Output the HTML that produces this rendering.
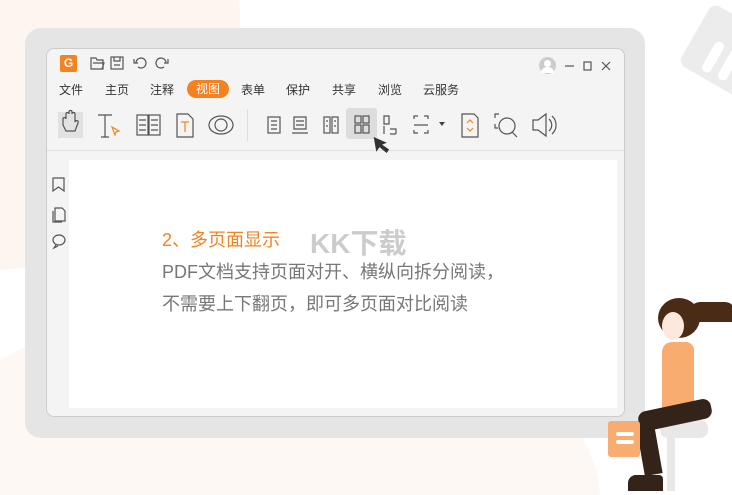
<!DOCTYPE html>
<html><head><meta charset="utf-8"><style>
*{margin:0;padding:0;box-sizing:border-box}
html,body{width:732px;height:495px;overflow:hidden}
body{background:#fff;position:relative;font-family:"Liberation Sans","Noto Sans CJK SC",sans-serif}
#w{position:absolute;left:0;top:0;width:732px;height:495px;overflow:hidden}
.abs{position:absolute}
.menu span{position:absolute;top:0;font-size:12px;color:#333}
svg{position:absolute;overflow:visible}
.ic{fill:none;stroke:#555;stroke-width:1.2}
</style></head><body><div id="w">
<div class="abs" style="left:-260px;top:-230px;width:500px;height:500px;border-radius:50%;background:#fdf5f0"></div>
<div class="abs" style="left:-100px;top:300px;width:700px;height:400px;border-radius:50%;background:#fef8f4"></div>
<div class="abs" style="left:690px;top:18px;width:80px;height:70px;background:#ececec;border-radius:8px;transform:rotate(30deg)"></div>
<div class="abs" style="left:708px;top:40px;width:10px;height:34px;background:#fff;border-radius:5px;transform:rotate(30deg)"></div>
<div class="abs" style="left:724px;top:48px;width:10px;height:34px;background:#fff;border-radius:5px;transform:rotate(30deg)"></div>
<div class="abs" style="left:25px;top:28px;width:620px;height:410px;background:#e5e5e5;border-radius:16px"></div>
<div class="abs" style="left:46px;top:48px;width:579px;height:369px;background:#f4f4f4;border:1px solid #ccc;border-radius:8px"></div>
<div class="abs" style="left:47px;top:150px;width:577px;height:1px;background:#e0e0e0"></div>
<div class="abs" style="left:69px;top:160px;width:548px;height:248px;background:#fff"></div>
<div class="abs" style="left:60px;top:55px;width:17px;height:17px;background:#f58220;border-radius:2px;color:#fff;font-size:12px;font-weight:bold;text-align:center;line-height:16px">G</div>
<svg style="left:90px;top:55px" width="80" height="16" class="ic"><path d="M1 3h5l1 2h6v9H1z M3 8h11l-2 6"/><rect x="21" y="2" width="12" height="12"/><path d="M24 2v4h6V2 M24 10h6"/><path d="M46 8a5 5 0 1 1 2 4 M44 4v4h4"/><path d="M76 8a5 5 0 1 0-2 4 M78 4v4h-4"/></svg>
<div class="abs" style="left:539px;top:57px;width:17px;height:17px;border-radius:50%;background:#ccc"></div>
<div class="abs" style="left:544px;top:60px;width:7px;height:7px;border-radius:50%;background:#fff"></div>
<div class="abs" style="left:541px;top:67px;width:13px;height:6px;border-radius:6px 6px 0 0;background:#fff"></div>
<svg style="left:565px;top:60px" width="50" height="12" class="ic"><path d="M0 6h9"/><rect x="19" y="2" width="7" height="8"/><path d="M37 2l8 8M45 2l-8 8"/></svg>
<div class="menu abs" style="left:0;top:81px;width:732px;height:16px">
<span style="left:59px">文件</span><span style="left:105px">主页</span><span style="left:150px">注释</span>
<span style="left:187px;top:-1px;width:42px;height:18px;background:#f58220;border-radius:9px;color:#fff;text-align:center;line-height:18px">视图</span>
<span style="left:241px">表单</span><span style="left:286px">保护</span><span style="left:332px">共享</span><span style="left:378px">浏览</span><span style="left:423px">云服务</span></div>
<div class="abs" style="left:58px;top:112px;width:25px;height:26px;background:#e2e2e2"></div>
<div class="abs" style="left:346px;top:108px;width:31px;height:31px;background:#ddd;border-radius:3px"></div>
<div class="abs" style="left:247px;top:109px;width:1px;height:32px;background:#ddd"></div>
<svg style="left:0;top:0" width="732" height="160" class="ic">
<path d="M63 125v-6c0-2 3-2 3 0v-5c0-2 3-2 3 0v-2c0-2 3-2 3 0v2c0-2 3-2 3 0v8c1-2 4-2 3 1l-3 8h-9z"/>
<path d="M98 115h14M105 115v22M101 137h8"/><path d="M112 127l7 4-3 1-1 3z" stroke="#f58220"/>
<rect x="137" y="115" width="11" height="20"/><rect x="149" y="115" width="11" height="20"/><path d="M139 120h7M139 125h7M139 130h7M151 120h7M151 125h7M151 130h7"/>
<path d="M177 114h11l5 5v18h-16z"/><path d="M181 122h8M185 122v10" stroke="#f58220"/>
<ellipse cx="221" cy="125" rx="12" ry="9"/><circle cx="221" cy="125" r="6"/>
<rect x="268" y="117" width="12" height="16"/><path d="M271 121h6M271 125h6M271 129h6"/>
<path d="M294 117h12v12h-12zM292 133h16M296 121h8M296 125h8"/>
<rect x="324" y="117" width="6" height="16"/><rect x="332" y="117" width="6" height="16"/><path d="M326 121h2M326 126h2M334 121h2M334 126h2"/>
<rect x="355" y="116" width="6" height="7"/><rect x="363" y="116" width="6" height="7"/><rect x="355" y="125" width="6" height="8"/><rect x="363" y="125" width="6" height="8"/>
<path d="M384 116h5v8h-5zM384 126v8M390 129h6v5M390 134h6"/>
<path d="M414 119v-3h4M414 130v3h4M424 116h4v3M424 133h4v-3M414 125h14"/>
<path d="M462 114h12l4 4v19h-16z"/><path d="M467 123l3-3 3 3M467 128l3 3 3-3" stroke="#f58220"/>
<path d="M495 118v-4h4M495 124v4h3"/><circle cx="507" cy="126" r="8"/><path d="M512 132l5 5"/>
<path d="M533 120h5l8-6v22l-8-6h-5z M549 119a8 8 0 0 1 0 12M552 116a12 12 0 0 1 0 18"/>
</svg>
<svg style="left:439px;top:122px" width="6" height="4"><path d="M0 0h6L3 4z" fill="#444"/></svg>
<svg style="left:372px;top:134px" width="24" height="24"><path d="M3 2l0 15 4-4 6 7 3-3-6-6 5-1z" fill="#333" transform="rotate(-10 8 10)"/></svg>
<svg style="left:50px;top:176px" width="20" height="75" class="ic"><path d="M3 2h11v13l-5.5-4L3 15z"/><path d="M5 32h7l3 3v10H5z M3 35v11h9"/><ellipse cx="9" cy="64" rx="6" ry="5"/><path d="M6 69l-2 3 4-2"/></svg>
<div class="abs" style="left:162px;top:226px;font-size:18px;color:#f58220;white-space:nowrap">2、多页面显示</div>
<div class="abs" style="left:162px;top:258px;font-size:18px;color:#777;white-space:nowrap">PDF文档支持页面对开、横纵向拆分阅读，</div>
<div class="abs" style="left:162px;top:290px;font-size:18px;color:#777;white-space:nowrap">不需要上下翻页，即可多页面对比阅读</div>
<div class="abs" style="left:310px;top:222px;font-size:28px;font-weight:bold;color:#ccc;white-space:nowrap">KK下载</div>
<div class="abs" style="left:660px;top:420px;width:48px;height:18px;background:#e8e8e8;border-radius:8px"></div>
<div class="abs" style="left:667px;top:436px;width:8px;height:55px;background:#e8e8e8"></div>
<div class="abs" style="left:658px;top:298px;width:42px;height:40px;background:#4a2c16;border-radius:50%"></div>
<div class="abs" style="left:690px;top:302px;width:45px;height:20px;background:#4a2c16;border-radius:20px 20px 0 20px"></div>
<div class="abs" style="left:662px;top:312px;width:22px;height:28px;background:#fde8dd;border-radius:50%"></div>
<div class="abs" style="left:662px;top:342px;width:32px;height:68px;background:#f9ac6f;border-radius:10px 8px 4px 4px"></div>
<div class="abs" style="left:638px;top:405px;width:74px;height:20px;background:#332318;border-radius:8px;transform:rotate(-12deg)"></div>
<div class="abs" style="left:640px;top:420px;width:18px;height:55px;background:#332318;transform:rotate(-10deg)"></div>
<div class="abs" style="left:628px;top:475px;width:35px;height:16px;background:#332318;border-radius:8px 4px 0 0"></div>
<div class="abs" style="left:608px;top:421px;width:32px;height:36px;background:#f9ac6f;border-radius:3px"></div>
<div class="abs" style="left:616px;top:432px;width:18px;height:4px;background:#fff;border-radius:2px"></div>
<div class="abs" style="left:616px;top:440px;width:18px;height:4px;background:#fff;border-radius:2px"></div>
</div></body></html>
